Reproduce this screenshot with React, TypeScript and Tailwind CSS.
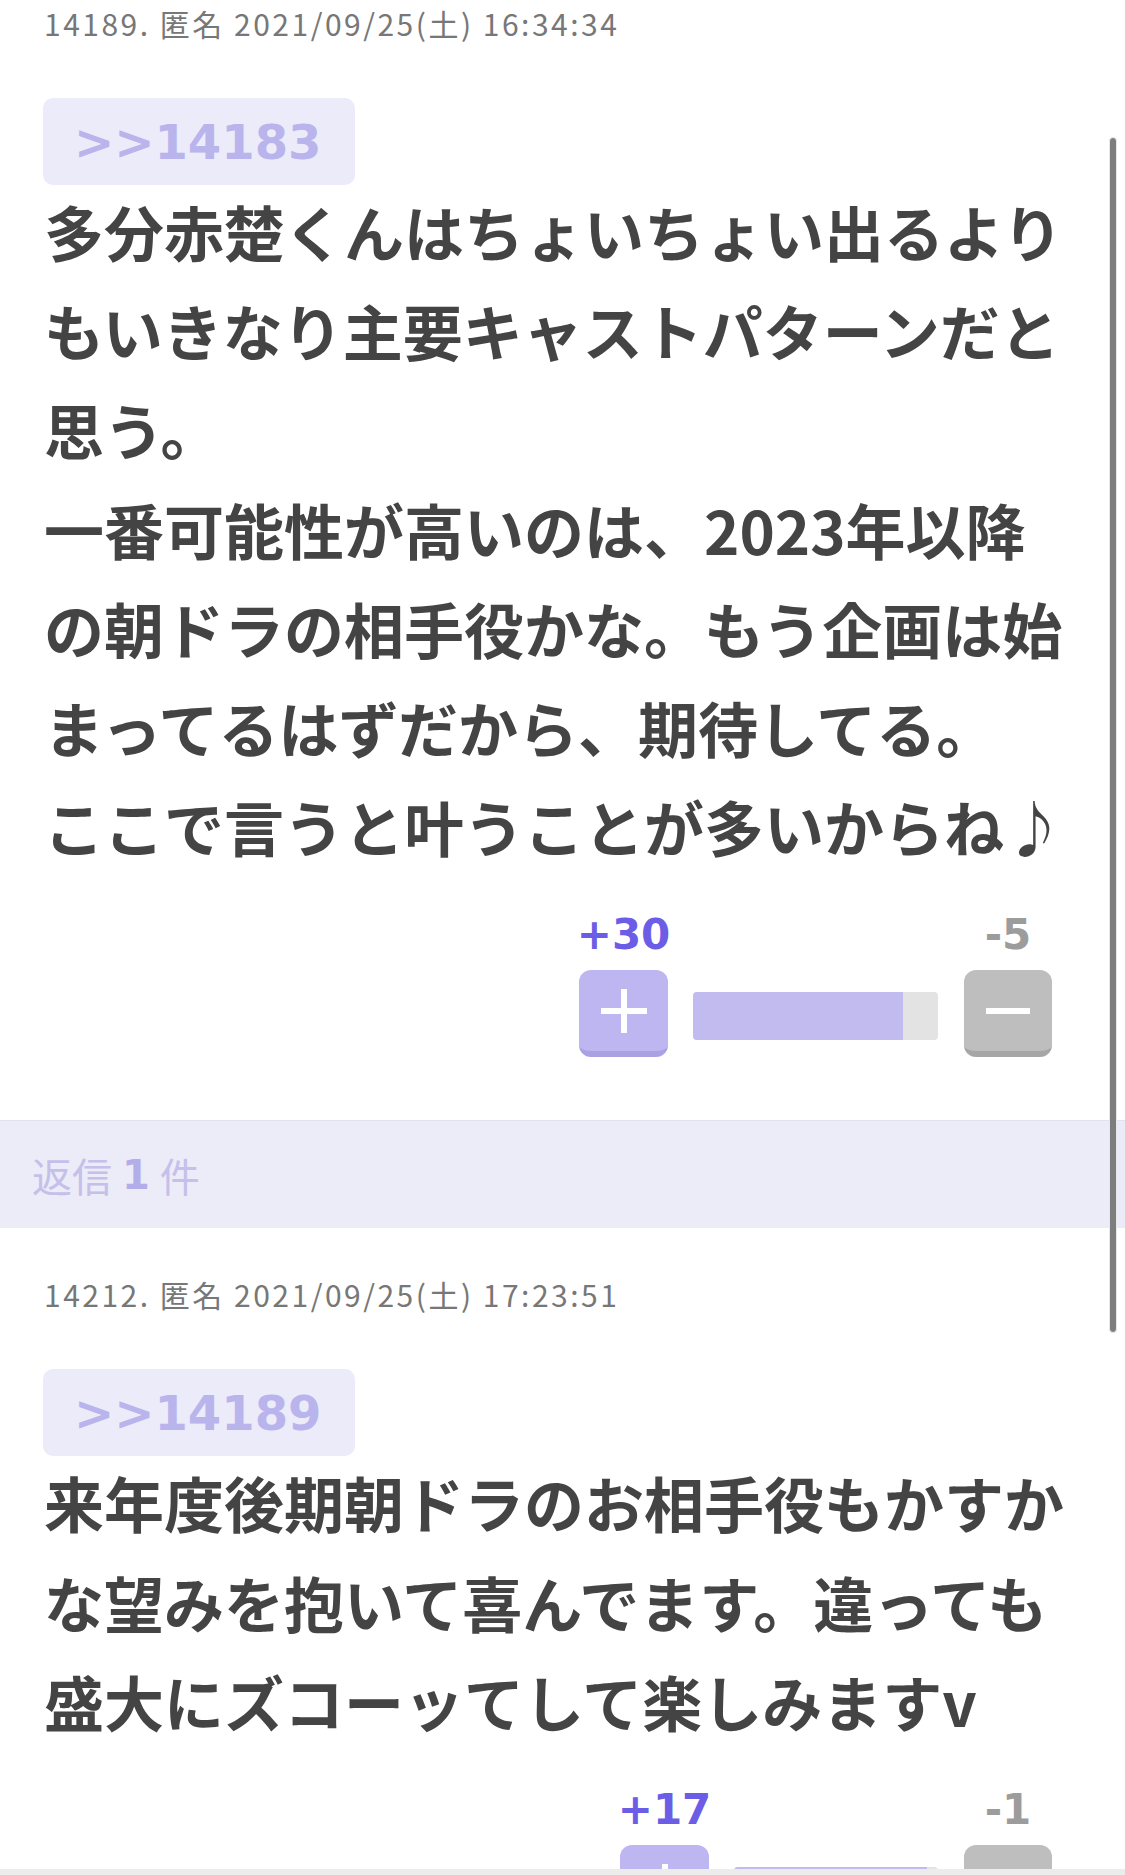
import React from 'react';

interface Post {
  head: string;
  anchor: string;
  lines: string[];
  plus: number;
  minus: number;
  barW: number;
}

const posts: Post[] = [
  {
    head: '14189. 匿名 2021/09/25(土) 16:34:34',
    anchor: '>>14183',
    lines: [
      '多分赤楚くんはちょいちょい出るよりもいきなり主要キャストパターンだと思う。',
      '一番可能性が高いのは、2023年以降の朝ドラの相手役かな。もう企画は始まってるはずだから、期待してる。',
      'ここで言うと叶うことが多いからね♪',
    ],
    plus: 30,
    minus: 5,
    barW: 245,
  },
  {
    head: '14212. 匿名 2021/09/25(土) 17:23:51',
    anchor: '>>14189',
    lines: ['来年度後期朝ドラのお相手役もかすかな望みを抱いて喜んでます。違っても盛大にズコーッてして楽しみますv'],
    plus: 17,
    minus: 1,
    barW: 204,
  },
];

const jp = { fontFamily: '"Noto Sans CJK JP", "Noto Sans", sans-serif' };
const verd = { fontFamily: '"DejaVu Sans", Verdana, sans-serif' };

function Votes({ plus, minus, barW }: { plus: number; minus: number; barW: number }) {
  const ratio = (plus / (plus + minus)) * 100;
  return (
    <div className="ml-auto mr-[73px] mt-[35px] flex w-fit items-end">
      <div className="flex w-[89px] flex-col items-center">
        <div className="h-[50px] text-[42px] font-bold leading-[50px] text-[#6c5de6]" style={verd}>
          +{plus}
        </div>
        <div className="mt-[10px] flex h-[87px] w-[89px] items-center justify-center rounded-[12px] border-b-[6px] border-[#a9a1e2] bg-[#bdb6f0]">
          <svg width="46" height="44" viewBox="0 0 46 44">
            <rect x="0" y="19" width="46" height="6" fill="#fff" />
            <rect x="20" y="0" width="6" height="44" fill="#fff" />
          </svg>
        </div>
      </div>
      <div className="mx-[25px] mb-[17px] h-[48px] overflow-hidden rounded-[4px] bg-[#e3e3e3]" style={{ width: barW }}>
        <div className="h-full bg-[#c1bbf0]" style={{ width: `${ratio}%` }} />
      </div>
      <div className="ml-[1px] flex w-[88px] flex-col items-center">
        <div className="h-[50px] text-[42px] font-bold leading-[50px] text-[#9c9c9c]" style={verd}>
          -{minus}
        </div>
        <div className="mt-[10px] flex h-[87px] w-[88px] items-center justify-center rounded-[12px] border-b-[6px] border-[#a6a6a6] bg-[#bebebe]">
          <svg width="44" height="6" viewBox="0 0 44 6">
            <rect x="0" y="0" width="44" height="6" fill="#fff" />
          </svg>
        </div>
      </div>
    </div>
  );
}

function PostItem({ post, top }: { post: Post; top: string }) {
  return (
    <div className={`${top} pb-[63px]`}>
      <div className="px-[44px]">
        <div className="h-[40px] whitespace-nowrap text-[30px] leading-[40px] tracking-[2.5px] text-[#777]" style={jp}>
          {post.head}
        </div>
        <div
          className="mt-[55px] ml-[-1px] flex h-[87px] w-[312px] items-center rounded-[10px] bg-[#ecebf9] px-[31px] text-[48px] font-bold text-[#b9b4ec]"
          style={verd}
        >
          {post.anchor}
        </div>
        <div className="-mt-[4px] w-[1025px] text-[60px] font-bold leading-[99.2px] text-[#444]" style={jp}>
          {post.lines.map((l, i) => (
            <div key={i}>{l}</div>
          ))}
        </div>
      </div>
      <Votes plus={post.plus} minus={post.minus} barW={post.barW} />
    </div>
  );
}

export default function App() {
  return (
    <div className="relative h-[1875px] w-[1125px] overflow-hidden bg-white">
      <PostItem post={posts[0]} top="pt-[3px]" />
      <div className="flex h-[108px] items-center border-t border-[#e2e1ef] bg-[#ecebf8] pl-[32px] text-[40px] text-[#c4c0ea]" style={jp}>
        返信
        <span className="mx-[10px] font-bold text-[#b3ade9]" style={verd}>1</span>
        件
      </div>
      <PostItem post={posts[1]} top="pt-[46px]" />
      <div className="absolute left-[1109px] top-[137px] h-[1196px] w-[8px] rounded-full border border-[#e8e8e8] bg-[#7d7d7d]" />
      <div className="absolute bottom-0 left-0 h-[6px] w-full bg-[#ececec]" />
    </div>
  );
}
